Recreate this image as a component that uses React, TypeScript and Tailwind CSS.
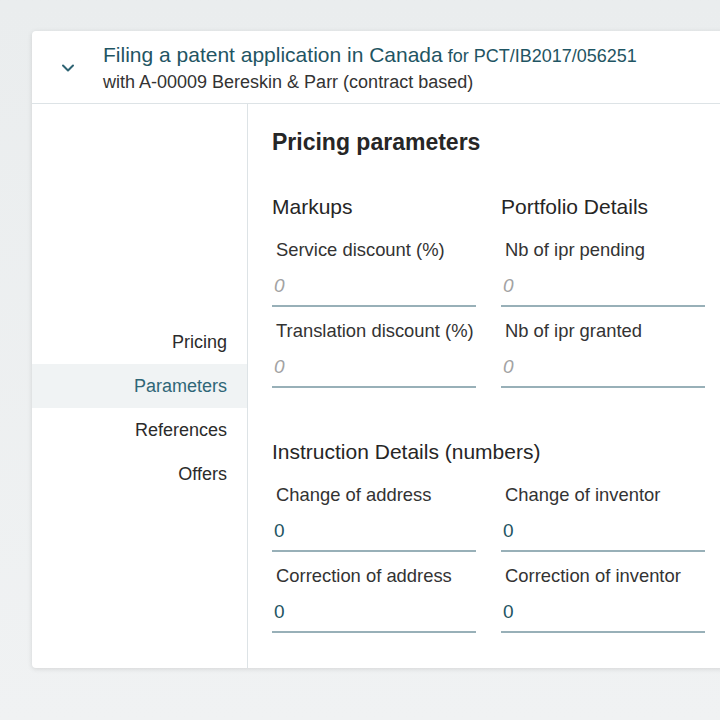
import * as React from "react"

type Field = { label: string; value?: string }

const markups: Field[] = [
  { label: "Service discount (%)" },
  { label: "Translation discount (%)" },
]
const portfolio: Field[] = [
  { label: "Nb of ipr pending" },
  { label: "Nb of ipr granted" },
]
const instruction: Field[] = [
  { label: "Change of address", value: "0" },
  { label: "Change of inventor", value: "0" },
  { label: "Correction of address", value: "0" },
  { label: "Correction of inventor", value: "0" },
]

const navItems = ["Pricing", "Parameters", "References", "Offers"]

export default function App() {
  return (
    <div
      className="h-[720px] w-[720px] overflow-hidden bg-gradient-to-b from-[#eaedee] to-[#f0f2f3] pl-[32px] pt-[31px]"
      style={{ fontFamily: '"Liberation Sans", Arial, sans-serif' }}
    >
      <div className="w-[760px] rounded-[4px] bg-white shadow-[0_1px_5px_rgba(0,0,0,0.12)]">
        <Header />
        <div className="flex">
          <Sidebar active="Parameters" />
          <div className="flex-1 border-l border-[#dde3e6] pb-[23px] pl-[24px] pt-[24px]">
            <h2 className="text-[23px] font-bold leading-[28px] text-[#262626]">
              Pricing parameters
            </h2>
            <div className="mt-[39px] grid w-[433px] grid-cols-2 gap-x-[25px]">
              <Section title="Markups" fields={markups} />
              <Section title="Portfolio Details" fields={portfolio} />
            </div>
            <div className="mt-[40px] w-[433px]">
              <h3 className="text-[21px] leading-[24px] text-[#262626]">
                Instruction Details (numbers)
              </h3>
              <div className="mt-[19px] grid grid-cols-2 gap-x-[25px]">
                {instruction.map((f) => (
                  <FieldRow key={f.label} field={f} />
                ))}
              </div>
            </div>
          </div>
        </div>
      </div>
    </div>
  )
}

function Header() {
  return (
    <div className="flex h-[73px] items-center border-b border-[#dde3e6] pt-[2px]">
      <div className="flex w-[71px] justify-center">
        <svg width="14" height="10" viewBox="0 0 14 10">
          <path
            d="M2 2.5 L7 7.5 L12 2.5"
            fill="none"
            stroke="#2e6373"
            strokeWidth="2"
            strokeLinecap="round"
            strokeLinejoin="round"
          />
        </svg>
      </div>
      <div>
        <div className="flex h-[26px] items-baseline gap-[5px] whitespace-nowrap text-[#1f5563]">
          <span className="text-[21px] leading-[26px]">Filing a patent application in Canada</span>
          <span className="text-[18px] leading-[26px]">for PCT/IB2017/056251</span>
        </div>
        <div className="mt-[2px] text-[18px] leading-[24px] text-[#333]">
          with A-00009 Bereskin &amp; Parr (contract based)
        </div>
      </div>
    </div>
  )
}

function Sidebar({ active }: { active: string }) {
  return (
    <div className="w-[215px] shrink-0 pt-[216px]">
      {navItems.map((item) => (
        <div
          key={item}
          className={
            item === active
              ? "bg-[#f0f3f4] py-[10px] pr-[20px] text-right text-[18px] leading-[24px] text-[#2f6677]"
              : "py-[10px] pr-[20px] text-right text-[18px] leading-[24px] text-[#2b2b2b]"
          }
        >
          {item}
        </div>
      ))}
    </div>
  )
}

function Section({ title, fields }: { title: string; fields: Field[] }) {
  return (
    <div>
      <h3 className="whitespace-nowrap text-[21px] leading-[24px] text-[#262626]">{title}</h3>
      <div className="mt-[19px]">
        {fields.map((f) => (
          <FieldRow key={f.label} field={f} />
        ))}
      </div>
    </div>
  )
}

function FieldRow({ field }: { field: Field }) {
  return (
    <div className="mb-[12px]">
      <div className="whitespace-nowrap pl-[4px] text-[18.4px] leading-[24px] text-[#333]">
        {field.label}
      </div>
      <div className="mt-[6px] flex h-[39px] items-center border-b-2 border-[#98b0b8] pl-[2px]">
        {field.value ? (
          <span className="text-[19px] text-[#1f5563]">{field.value}</span>
        ) : (
          <span className="text-[19px] italic text-[#a3a3a3]">0</span>
        )}
      </div>
    </div>
  )
}
